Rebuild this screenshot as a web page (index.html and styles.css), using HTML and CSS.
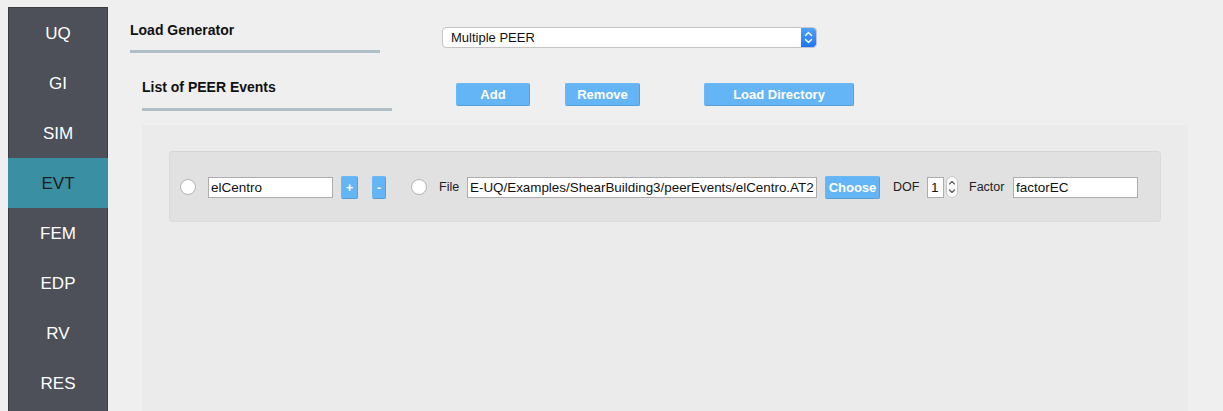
FILE: index.html
```html
<!DOCTYPE html>
<html>
<head>
<meta charset="utf-8">
<link rel="stylesheet" href="styles.css">
</head>
<body>
<div class="app">
  <nav class="sidebar">
    <div class="nav-item">UQ</div>
    <div class="nav-item">GI</div>
    <div class="nav-item">SIM</div>
    <div class="nav-item active">EVT</div>
    <div class="nav-item">FEM</div>
    <div class="nav-item">EDP</div>
    <div class="nav-item">RV</div>
    <div class="nav-item">RES</div>
  </nav>
  <main class="main">
    <div class="gen-row">
      <div class="title title-gen">Load Generator</div>
      <div class="combo">
        <span class="combo-text">Multiple PEER</span>
        <span class="combo-step">
          <svg width="9" height="13" viewBox="0 0 9 13"><path d="M1.5 4.5 L4.5 1.5 L7.5 4.5 M1.5 8.5 L4.5 11.5 L7.5 8.5" fill="none" stroke="#fff" stroke-width="1.4" stroke-linecap="round" stroke-linejoin="round"/></svg>
        </span>
      </div>
    </div>
    <div class="list-row">
      <div class="title title-list">List of PEER Events</div>
      <button class="btn btn-add">Add</button>
      <button class="btn btn-remove">Remove</button>
      <button class="btn btn-load">Load Directory</button>
    </div>
    <section class="panel">
      <div class="event">
        <span class="radio r1"></span>
        <div class="field f-name">elCentro</div>
        <button class="btn sm btn-plus">+</button>
        <button class="btn sm btn-minus">-</button>
        <span class="radio r2"></span>
        <span class="lbl l-file">File</span>
        <div class="field f-path">E-UQ/Examples/ShearBuilding3/peerEvents/elCentro.AT2</div>
        <button class="btn btn-choose">Choose</button>
        <span class="lbl l-dof">DOF</span>
        <div class="field f-dof">1</div>
        <span class="spin">
          <svg width="10" height="20" viewBox="0 0 10 20"><path d="M2.5 7 L5 4.5 L7.5 7 M2.5 13 L5 15.5 L7.5 13" fill="none" stroke="#555" stroke-width="1.1" stroke-linecap="round" stroke-linejoin="round"/></svg>
        </span>
        <span class="lbl l-factor">Factor</span>
        <div class="field f-factor">factorEC</div>
      </div>
    </section>
  </main>
</div>
</body>
</html>
```

FILE: styles.css
```css
* { box-sizing: border-box; }
html, body { margin: 0; padding: 0; }
body {
  background: #efefef;
  font-family: "Liberation Sans", Arial, sans-serif;
  color: #111;
  width: 1223px;
  height: 411px;
  overflow: hidden;
}
.app {
  display: flex;
  height: 411px;
}
.sidebar {
  margin-left: 8px;
  margin-top: 7px;
  width: 100px;
  height: 420px;
  background: #4d5058;
  border: 1px solid #3a3c42;
  border-bottom: none;
  display: flex;
  flex-direction: column;
}
.nav-item {
  height: 50px;
  flex: none;
  display: flex;
  align-items: center;
  justify-content: center;
  color: #fff;
  font-size: 17px;
  padding-top: 1px;
}
.nav-item.active {
  background: #3b8fa3;
  color: #1b1b1b;
  margin: 0 -1px;
}
.main {
  flex: 1;
  padding-left: 22px;
  display: flex;
  flex-direction: column;
}
.title {
  width: 250px;
  font-size: 14px;
  font-weight: bold;
  line-height: 16px;
  border-bottom: 3px solid #b0bec5;
  color: #111;
}
.gen-row { display: flex; align-items: flex-start; }
.title-gen { padding-top: 22px; padding-bottom: 12px; }
.combo {
  margin-left: 62px;
  margin-top: 27px;
  width: 375px;
  height: 21px;
  background: #fff;
  border: 1px solid #c4c4c4;
  border-radius: 4px;
  display: flex;
  align-items: center;
  justify-content: space-between;
  overflow: hidden;
}
.combo-text {
  font-size: 13px;
  padding-left: 8px;
  color: #111;
}
.combo-step {
  width: 15px;
  height: 100%;
  background: linear-gradient(#4fa3fb, #1d76f5);
  display: flex;
  align-items: center;
  justify-content: center;
  border-radius: 0 3px 3px 0;
}
.list-row { display: flex; align-items: flex-start; }
.title-list { margin-left: 12px; padding-top: 26px; padding-bottom: 13px; }
.btn {
  background: #64b5f6;
  color: #fff;
  border: 1px solid #5a9fd6;
  border-top-color: #6cb8f5;
  border-left-color: #6cb8f5;
  border-radius: 2px;
  font-family: "Liberation Sans", Arial, sans-serif;
  font-weight: bold;
  font-size: 13px;
  height: 23px;
  padding: 0;
  display: flex;
  align-items: center;
  justify-content: center;
  flex: none;
}
.btn-add { margin-left: 64px; margin-top: 30px; width: 74px; }
.btn-remove { margin-left: 35px; margin-top: 30px; width: 75px; }
.btn-load { margin-left: 64px; margin-top: 30px; width: 150px; }
.panel {
  margin-top: 14px;
  margin-left: 12px;
  width: 1046px;
  flex: 1;
  background: #ebebeb;
  padding: 26px 27px;
}
.event {
  height: 71px;
  background: #e1e1e1;
  border: 1px solid #dadada;
  border-top-color: #d6d6d6;
  border-radius: 4px;
  display: flex;
  align-items: center;
  padding-top: 1px;
  font-size: 13px;
}
.radio {
  width: 16px;
  height: 16px;
  border-radius: 50%;
  background: #fff;
  border: 1px solid #b4b4b4;
  flex: none;
}
.r1 { margin-left: 10px; }
.r2 { margin-left: 25px; }
.field {
  height: 21px;
  background: #fff;
  border: 1px solid #adadad;
  font-size: 13.5px;
  line-height: 19px;
  padding-left: 2px;
  white-space: nowrap;
  overflow: hidden;
  flex: none;
  color: #111;
}
.f-name { margin-left: 12px; width: 125px; }
.btn.sm { width: 17px; font-size: 13px; }
.btn-plus { margin-left: 8px; }
.btn-minus { margin-left: 14px; width: 14px !important; }
.lbl { flex: none; color: #222; font-size: 12.5px; white-space: nowrap; }
.l-file { margin-left: 12px; width: 19px; }
.f-path { margin-left: 9px; width: 350px; font-size: 13.4px; }
.btn-choose { margin-left: 8px; width: 55px; }
.l-dof { margin-left: 13px; width: 24px; }
.f-dof { margin-left: 10px; width: 17px; padding-left: 3px; }
.spin {
  margin-left: 2px;
  width: 12px;
  height: 22px;
  background: #fafafa;
  border: 1px solid #c8c8c8;
  border-radius: 6px;
  display: flex;
  align-items: center;
  justify-content: center;
  flex: none;
}
.l-factor { margin-left: 11px; width: 35px; }
.f-factor { margin-left: 9px; width: 125px; }
```
